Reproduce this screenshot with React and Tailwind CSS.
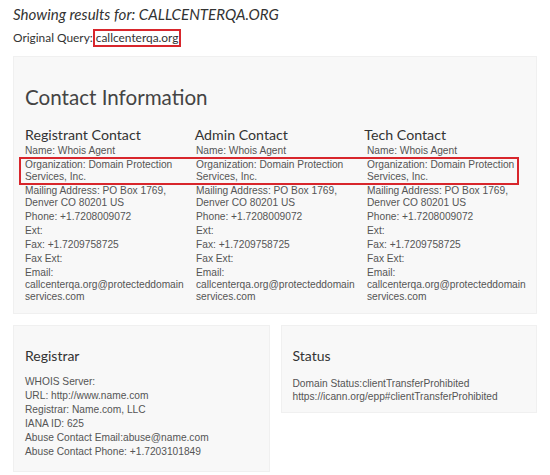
const contacts = ["Registrant Contact", "Admin Contact", "Tech Contact"];

const fields = [
  { label: "Name: Whois Agent" },
  { label: "Organization: Domain Protection Services, Inc.", highlight: true },
  { label: "Mailing Address: PO Box 1769, Denver CO 80201 US" },
  { label: "Phone: +1.7208009072" },
  { label: "Ext:" },
  { label: "Fax: +1.7209758725" },
  { label: "Fax Ext:" },
  { label: "Email:", email: true },
];

const registrar = [
  "WHOIS Server:",
  "URL: http://www.name.com",
  "Registrar: Name.com, LLC",
  "IANA ID: 625",
  "Abuse Contact Email:abuse@name.com",
  "Abuse Contact Phone: +1.7203101849",
];

function FieldRow({ field }) {
  const cells = contacts.map((c) => (
    <div key={c} className="w-[162px] shrink-0">
      {field.email ? (
        <>
          <div>Email:</div>
          <div className="break-all">callcenterqa.org@protecteddomainservices.com</div>
        </>
      ) : (
        field.label
      )}
    </div>
  ));

  // the organization row is boxed in red across all three contacts
  if (field.highlight) {
    return (
      <div className="flex gap-x-[9px] -ml-[4px] pl-[4px] w-[496px] outline-2 outline-[#d8262c]">
        {cells}
      </div>
    );
  }
  return <div className="flex gap-x-[9px]">{cells}</div>;
}

export default function App() {
  return (
    <div className="w-[550px] h-[475px] bg-white px-[13px] pt-[5px] font-[family-name:Lato,sans-serif] overflow-hidden">
      {/* Header */}
      <h1 className="italic text-[15.1px] leading-[19px] text-[#333]">
        Showing results for: CALLCENTERQA.ORG
      </h1>
      <p className="text-[11.9px] leading-[18px] text-[#333] mt-[5px]">
        Original Query:
        <span className="inline-block align-top border-2 border-[#d8262c] px-[1px] leading-[14px]">
          callcenterqa.org
        </span>
      </p>

      {/* Contact Information */}
      <div className="mt-[9px] bg-[#f8f8f8] border border-[#f0f0f0] px-[11px] pt-[28px] pb-[10px]">
        <h2 className="text-[20.6px] leading-[25px] text-[#444]">Contact Information</h2>
        <div className="mt-[16px] flex gap-x-[9px] text-[14.2px] leading-[17px] text-[#333]">
          {contacts.map((c) => (
            <div key={c} className="w-[162px]">{c}</div>
          ))}
        </div>
        <div className="mt-[2px] flex flex-col gap-y-[2px] font-[family-name:Liberation_Sans,Arial,sans-serif] text-[10.2px] leading-[12px] text-[#555]">
          {fields.map((f) => (
            <FieldRow key={f.label} field={f} />
          ))}
        </div>
      </div>

      {/* Registrar / Status */}
      <div className="mt-[11px] grid grid-cols-2 gap-x-[11px] items-start">
        <div className="bg-[#f8f8f8] border border-[#f0f0f0] px-[11px] pt-[21px] pb-[12px]">
          <h3 className="text-[14px] leading-[17px] text-[#333]">Registrar</h3>
          <div className="mt-[11px] font-[family-name:Liberation_Sans,Arial,sans-serif] text-[10.2px] leading-[14px] text-[#555]">
            {registrar.map((r) => (
              <div key={r}>{r}</div>
            ))}
          </div>
        </div>
        <div className="bg-[#f8f8f8] border border-[#f0f0f0] px-[11px] pt-[21px] pb-[9px]">
          <h3 className="text-[14px] leading-[17px] text-[#333]">Status</h3>
          <div className="mt-[13px] font-[family-name:Liberation_Sans,Arial,sans-serif] text-[10.2px] leading-[13px] text-[#555]">
            <div>Domain Status:clientTransferProhibited</div>
            <div>https://icann.org/epp#clientTransferProhibited</div>
          </div>
        </div>
      </div>
    </div>
  );
}
